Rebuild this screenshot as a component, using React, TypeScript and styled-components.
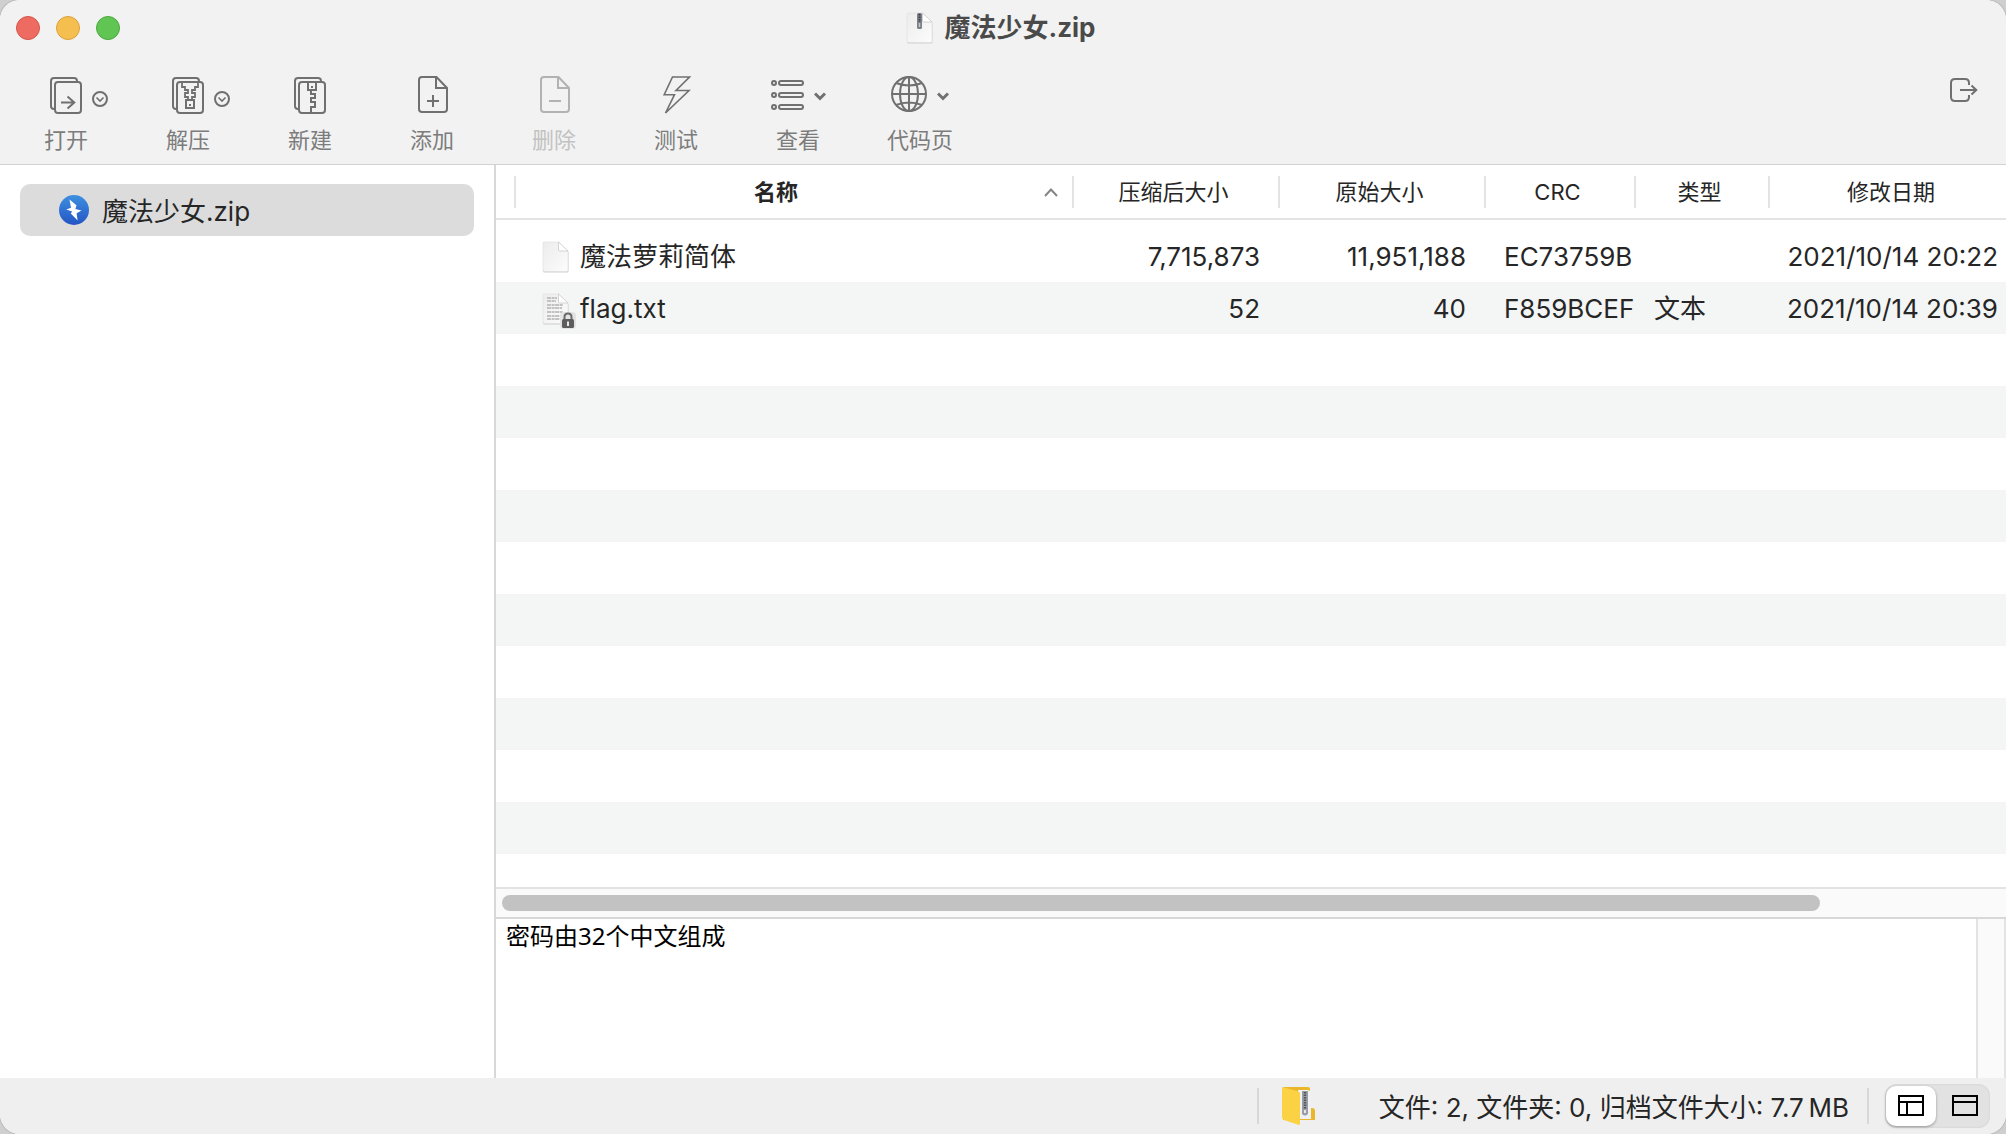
import React, { useState } from "react";
import styled, { createGlobalStyle, css } from "styled-components";

const color = {
  chrome: "#f2f2f2",
  status: "#efefef",
  line: "#e3e3e3",
  divider: "#d8d8d8",
  text: "#262626",
  label: "#7c7c7c",
  icon: "#707070",
  selected: "#dcdcdc",
  stripe: "#f4f5f5",
  track: "#fafafa",
};

const ROW = 52;
const HEAD = 65;

const GlobalStyle = createGlobalStyle`
  * { box-sizing: border-box; }
  body { margin: 0; background: #cfcfcf; }
  body, button, textarea {
    font-family: Inter, "Noto Sans CJK SC", sans-serif;
    color: ${color.text};
  }
  button { margin: 0; padding: 0; border: 0; background: none; }
  svg { display: block; flex: none; }
`;

const Window = styled.div`
  display: flex;
  flex-direction: column;
  height: 100vh;
  overflow: hidden;
  background: #fff;
  border-radius: 20px;
  box-shadow: 0 0 2px #8a8a8a;
`;

const Chrome = styled.header`
  background: ${color.chrome};
  border-bottom: 1px solid #d2d2d2;
`;

const TitleBar = styled.div`
  display: grid;
  grid-template-columns: 1fr auto 1fr;
  align-items: center;
  height: 54px;
  padding: 2px 22px 0 16px;
`;

const Lights = styled.div`
  display: flex;
  gap: 16px;
`;

const Light = styled.button<{ $fill: string; $edge: string }>`
  width: 24px;
  height: 24px;
  border-radius: 50%;
  background: ${(p) => p.$fill};
  border: 1px solid ${(p) => p.$edge};
`;

const Title = styled.h1`
  display: flex;
  align-items: center;
  gap: 10px;
  margin: 0;
  font-size: 26px;
  line-height: 36px;
  font-weight: 700;
  color: #4a4a4a;
`;

const Toolbar = styled.div`
  display: flex;
  align-items: flex-start;
  padding: 22px 28px 9px 5px;
`;

const ToolButton = styled.button`
  display: flex;
  flex-direction: column;
  align-items: center;
  gap: 11px;
  width: 122px;
  font-size: 22px;
  line-height: 30px;
  color: ${color.label};
  svg { color: ${color.icon}; }
  &:disabled { color: #c2c2c2; }
  &:disabled svg { color: #b2b2b2; }
`;

const IconRow = styled.span`
  display: grid;
  grid-template-columns: 1fr auto 1fr;
  align-items: center;
  gap: 10px;
  height: 38px;
  & > :first-child { grid-column: 2; }
`;

const IconPair = styled.span`
  display: flex;
  align-items: center;
  gap: 10px;
  height: 38px;
`;

const ExitButton = styled.button`
  margin-left: auto;
  color: ${color.icon};
`;

const Body = styled.div`
  display: flex;
  flex: 1;
  min-height: 0;
`;

const Sidebar = styled.nav`
  flex: none;
  width: 496px;
  padding: 19px 20px;
  border-right: 2px solid ${color.divider};
`;

const SideItem = styled.button`
  display: flex;
  align-items: center;
  gap: 13px;
  width: 100%;
  height: 52px;
  padding: 0 39px;
  border-radius: 10px;
  background: ${color.selected};
  font-size: 26px;
  line-height: 36px;
`;

const Label = styled.span`
  padding-top: 3px;
`;

const Main = styled.main`
  display: flex;
  flex: 1;
  flex-direction: column;
  min-width: 0;
`;

const List = styled.div`
  flex: 1;
  min-height: 0;
  overflow: hidden;
  background:
    linear-gradient(#fff, #fff) 0 0 / 100% ${HEAD}px no-repeat,
    linear-gradient(#fff 50%, ${color.stripe} 50%) 0 ${HEAD}px / 100% ${ROW * 2}px repeat-y;
`;

const Table = styled.table`
  width: 100%;
  table-layout: fixed;
  border-spacing: 0;
  tbody::before {
    content: "";
    display: block;
    height: 10px;
  }
`;

const Col = styled.col<{ $w?: number }>`
  ${(p) => p.$w && css`width: ${p.$w}px;`}
`;

const Th = styled.th`
  padding: 11px 0 10px;
  border-bottom: 2px solid ${color.line};
  font-weight: 400;
`;

const HeadCell = styled.button<{ $strong?: boolean; $shift?: boolean }>`
  display: flex;
  align-items: center;
  justify-content: center;
  width: 100%;
  height: 32px;
  padding: ${(p) => (p.$shift ? "0 0 0 6px" : p.$strong ? "0" : "0 5px 0 0")};
  border-left: 2px solid ${color.line};
  font-size: 22px;
  line-height: 30px;
  font-weight: ${(p) => (p.$strong ? 700 : 400)};
`;

const HeadLabel = styled.span`
  flex: 1;
`;

const SortMark = styled.span`
  display: flex;
  width: 36px;
  padding-left: 8px;
  color: #858585;
`;

const Td = styled.td<{ $right?: boolean }>`
  height: ${ROW}px;
  padding: 2px 18px 0 20px;
  font-size: 26px;
  line-height: 36px;
  white-space: nowrap;
  text-align: ${(p) => (p.$right ? "right" : "left")};
`;

const DateTd = styled(Td)`
  padding: 2px 8px 0 0;
`;

const NameCell = styled.div`
  display: flex;
  align-items: center;
  gap: 10px;
  padding-left: 6px;
`;

const ScrollTrack = styled.div`
  flex: none;
  height: 32px;
  padding: 6px 6px 0;
  background: ${color.track};
  border-top: 2px solid ${color.line};
  border-bottom: 2px solid ${color.divider};
`;

const ScrollThumb = styled.div`
  width: 88%;
  height: 16px;
  border-radius: 8px;
  background: #c2c2c2;
`;

const CommentPane = styled.div`
  display: flex;
  flex: none;
  height: 159px;
`;

const Comment = styled.textarea`
  flex: 1;
  padding: 0 10px;
  border: 0;
  outline: 0;
  resize: none;
  font-family: "Noto Sans", "Noto Sans CJK SC", sans-serif;
  font-size: 24px;
  line-height: 34px;
  color: #000;
`;

const CommentTrack = styled.div`
  width: 30px;
  background: ${color.track};
  border: 2px solid ${color.line};
  border-width: 0 2px;
`;

const StatusBar = styled.footer`
  display: flex;
  flex: none;
  align-items: center;
  justify-content: flex-end;
  height: 56px;
  padding-right: 16px;
  background: ${color.status};
  font-size: 26px;
  line-height: 36px;
`;

const Rule = styled.span`
  width: 2px;
  height: 36px;
  background: ${color.divider};
`;

const FolderButton = styled.button`
  margin: 0 63px 0 22px;
`;

const Summary = styled(Label)`
  margin-right: 18px;
`;

const Segments = styled.div`
  display: flex;
  gap: 4px;
  margin-left: 16px;
  padding: 2px 0 2px 1px;
  border-radius: 12px;
  background: #e2e2e2;
  box-shadow: inset 0 0 2px #c8c8c8;
`;

const Segment = styled.button<{ $on: boolean }>`
  display: grid;
  place-items: center;
  width: 50px;
  height: 40px;
  border-radius: 10px;
  color: #000;
  ${(p) => p.$on && css`
    background: #fff;
    box-shadow: 0 1px 3px rgba(0, 0, 0, 0.35);
  `}
`;

const stroke = { fill: "none", stroke: "currentColor", strokeWidth: 2 } as const;

const Sheets = ({ children }: { children: React.ReactNode }) => (
  <svg width="32" height="38" viewBox="0 0 32 38" {...stroke}>
    <path d="M5 33H4Q1 33 1 30V5Q1 2 4 2H24Q27 2 27 5V6" />
    <rect x="5" y="6" width="26" height="31" rx="3" />
    {children}
  </svg>
);

const OpenIcon = () => (
  <Sheets><path d="M11 26.5H24M17.5 20.5L24.3 26.5L17.5 32.5" /></Sheets>
);

const ExtractIcon = () => (
  <Sheets>
    <path d="M13 6H10V11H13V14H16V17H13V21H16V24M23 6H26V11H23V14H20V17H23V21H20V24" strokeWidth="1.8" />
    <rect x="14" y="24" width="8" height="8" />
    <path d="M17 29H19" />
  </Sheets>
);

const CreateIcon = () => (
  <Sheets>
    <path d="M14 6V14H22V6M17 11H19M17 14V18H21V22H17V26H21V31H17V37" />
  </Sheets>
);

const DocIcon = ({ plus }: { plus?: boolean }) => (
  <svg width="32" height="38" viewBox="-2 0 32 38" {...stroke}>
    <path d="M4 1H18.5L29 12V33Q29 36 26 36H4Q1 36 1 33V4Q1 1 4 1ZM18 1V12H29M9 25H21" />
    {plus && <path d="M15 19V31" />}
  </svg>
);

const BoltIcon = () => (
  <svg width="30" height="38" viewBox="-2 0 30 38" {...stroke} strokeWidth="1.6">
    <path d="M9.5 1H26.5L13 14.5H26L2.5 37L11.5 18.7H1.2Z" />
  </svg>
);

const ListIcon = () => (
  <svg width="34" height="38" viewBox="-1 0 34 38" {...stroke}>
    {[7, 19, 31].map((y) => (
      <g key={y}>
        <circle cx="3" cy={y} r="2" />
        <rect x="8" y={y - 2} width="24" height="4" rx="2" />
      </g>
    ))}
  </svg>
);

const GlobeIcon = () => (
  <svg width="36" height="38" viewBox="0 0 36 38" {...stroke}>
    <circle cx="18" cy="18" r="17" />
    <ellipse cx="18" cy="18" rx="9" ry="17" />
    <path d="M18 1V35M1 18H35M5 7Q18 12 31 7M5 29Q18 24 31 29" />
  </svg>
);

const RingChevron = () => (
  <svg width="16" height="24" viewBox="0 0 16 24" {...stroke}>
    <circle cx="8" cy="16" r="7" />
    <path d="M4.5 14.5L8 18L11.5 14.5" strokeWidth="1.6" />
  </svg>
);

const Chevron = () => (
  <svg width="12" height="12" viewBox="0 0 12 12" {...stroke} strokeWidth="3">
    <path d="M1 4.5L6 9.5L11 4.5" />
  </svg>
);

const ExitIcon = () => (
  <svg width="28" height="28" viewBox="0 0 28 28" {...stroke}>
    <path d="M19 9V7Q19 3 15 3H5Q1 3 1 7V21Q1 25 5 25H15Q19 25 19 21V19M10 14H26M21.5 9.5L26.3 14L21.5 18.5" />
  </svg>
);

const BoltBadge = () => (
  <svg width="30" height="30" viewBox="0 0 30 30">
    <defs>
      <linearGradient id="badge" x1="0" y1="0" x2="0" y2="1">
        <stop offset="0" stopColor="#3d90e0" />
        <stop offset="1" stopColor="#2455c4" />
      </linearGradient>
    </defs>
    <circle cx="15" cy="15" r="15" fill="url(#badge)" />
    <path d="M10.5 4.5L17.5 10.2L16.4 14L22.5 15.6L17.6 18.2L18.6 25.5L11.8 18.6L13.2 16.6L7.2 14.6L12 12.8Z" fill="#fff" />
  </svg>
);

const Paper = ({ kind }: { kind: "blank" | "text" | "zip" }) => (
  <svg width="30" height="36" viewBox="0 0 30 36">
    <defs>
      <linearGradient id={"paper-" + kind} x1="0" y1="0" x2="1" y2="1">
        <stop offset="0" stopColor="#ececec" />
        <stop offset="1" stopColor="#fcfcfc" />
      </linearGradient>
    </defs>
    <path d="M3 4.5H19L28.5 13V32Q28.5 33.5 27 33.5H4.5Q3 33.5 3 32Z" fill="#cfcfcf" />
    <path d="M4 3H18.5L28 12V31Q28 32.5 26.5 32.5H4.5Q3 32.5 3 31V4Q3 3 4 3Z" fill={`url(#paper-${kind})`} stroke="#dedede" strokeWidth=".6" />
    <path d="M18.5 3V11Q18.5 12 19.5 12H28Z" fill="#fff" stroke="#c9c9c9" strokeWidth=".8" />
    {kind === "text" && (
      <path d="M7 7H17M7 10H16M7 14H23M7 17H22M7 21H23M7 25H22M7 28H21" stroke="#c2c2c2" strokeWidth="1.8" strokeDasharray="4 .6 3 .5" />
    )}
    {kind === "zip" && (
      <>
        <rect x="13" y="3" width="5" height="16" rx="1.5" fill="#7d8187" />
        <path d="M15.5 4V12" stroke="#3f4349" strokeWidth="2" strokeDasharray="1.5 1" />
        <path d="M15.5 13V17" stroke="#c3c6ca" strokeWidth="1.5" />
      </>
    )}
  </svg>
);

const FileIconBox = styled.span`
  position: relative;
  display: block;
`;

const LockBadge = styled.svg`
  position: absolute;
  left: 20px;
  top: 20px;
`;

const FileIcon = ({ locked }: { locked: boolean }) => (
  <FileIconBox>
    <Paper kind={locked ? "text" : "blank"} />
    {locked && (
      <LockBadge width="16" height="18" viewBox="0 0 16 18">
        <rect x="0" y="1" width="16" height="17" rx="4" fill="#e3e3e3" />
        <path d="M4.5 9V6Q4.5 2.5 8 2.5Q11.5 2.5 11.5 6V9" fill="none" stroke="#6a6a6a" strokeWidth="2" />
        <rect x="2" y="8" width="12" height="9" rx="1.5" fill="#5d5d5d" />
        <path d="M8 10.5V15" stroke="#e8e8e8" strokeWidth="2" />
      </LockBadge>
    )}
  </FileIconBox>
);

const FolderIcon = () => (
  <svg width="35" height="40" viewBox="0 0 35 40">
    <path d="M1 3Q1 1 3 1H27Q29 1 29 3V22H31Q34 22 34 25V34H17L2 34Z" fill="#e9b62c" />
    <path d="M17 4H27Q30 5 30 7V33H17Z" fill="#f0f1f3" />
    <path d="M21 5H27V28Q24 31 21 28Z" fill="#9a9fa6" />
    <path d="M24 6V23" stroke="#50555d" strokeWidth="2.5" strokeDasharray="1.5 1" />
    <path d="M24 24V27" stroke="#e4e6e8" strokeWidth="2" />
    <path d="M1 3Q1 1 3 1.5L16 5Q19 5.500 19 8V37Q19 40 16.5 38.5L3 34Q1 33 1 31Z" fill="#fad243" />
  </svg>
);

const LayoutIcon = ({ split }: { split?: boolean }) => (
  <svg width="26" height="22" viewBox="0 0 26 22" {...stroke}>
    <path d="M1 1H25V20H1ZM1 7H25" />
    {split && <path d="M9 7V20" />}
  </svg>
);

type Tool = {
  label: string;
  icon: React.ReactNode;
  badge?: React.ReactNode;
  paired?: boolean;
  disabled?: boolean;
};

const tools: Tool[] = [
  { label: "打开", icon: <OpenIcon />, badge: <RingChevron /> },
  { label: "解压", icon: <ExtractIcon />, badge: <RingChevron /> },
  { label: "新建", icon: <CreateIcon /> },
  { label: "添加", icon: <DocIcon plus /> },
  { label: "删除", icon: <DocIcon />, disabled: true },
  { label: "测试", icon: <BoltIcon /> },
  { label: "查看", icon: <ListIcon />, badge: <Chevron />, paired: true },
  { label: "代码页", icon: <GlobeIcon />, badge: <Chevron />, paired: true },
];

const files = [
  { name: "魔法萝莉简体", packed: "7,715,873", size: "11,951,188", crc: "EC73759B", type: "", date: "2021/10/14 20:22", locked: false },
  { name: "flag.txt", packed: "52", size: "40", crc: "F859BCEF", type: "文本", date: "2021/10/14 20:39", locked: true },
];

export default function App() {
  const [view, setView] = useState(0);
  return (
    <>
      <GlobalStyle />
      <Window>
        <Chrome>
          <TitleBar>
            <Lights>
              <Light aria-label="关闭" $fill="#ed6b60" $edge="#d5544a" />
              <Light aria-label="最小化" $fill="#f5bf4f" $edge="#d9a13c" />
              <Light aria-label="缩放" $fill="#61c554" $edge="#4aa73d" />
            </Lights>
            <Title>
              <Paper kind="zip" />
              魔法少女.zip
            </Title>
          </TitleBar>
          <Toolbar>
            {tools.map((t) => {
              const Row = t.paired ? IconPair : IconRow;
              return (
                <ToolButton key={t.label} disabled={t.disabled}>
                  <Row>
                    {t.icon}
                    {t.badge}
                  </Row>
                  {t.label}
                </ToolButton>
              );
            })}
            <ExitButton aria-label="退出">
              <ExitIcon />
            </ExitButton>
          </Toolbar>
        </Chrome>
        <Body>
          <Sidebar>
            <SideItem>
              <BoltBadge />
              <Label>魔法少女.zip</Label>
            </SideItem>
          </Sidebar>
          <Main>
            <List>
              <Table>
                <colgroup>
                  <Col $w={18} />
                  <Col />
                  <Col $w={206} />
                  <Col $w={206} />
                  <Col $w={150} />
                  <Col $w={134} />
                  <Col $w={238} />
                </colgroup>
                <thead>
                  <tr>
                    <Th />
                    <Th aria-sort="ascending">
                      <HeadCell $strong>
                        <HeadLabel>名称</HeadLabel>
                        <SortMark>
                          <svg width="14" height="10" viewBox="0 0 14 10" {...stroke}>
                            <path d="M1 9L7 2.5L13 9" />
                          </svg>
                        </SortMark>
                      </HeadCell>
                    </Th>
                    <Th><HeadCell>压缩后大小</HeadCell></Th>
                    <Th><HeadCell>原始大小</HeadCell></Th>
                    <Th><HeadCell>CRC</HeadCell></Th>
                    <Th><HeadCell>类型</HeadCell></Th>
                    <Th><HeadCell $shift>修改日期</HeadCell></Th>
                  </tr>
                </thead>
                <tbody>
                  {files.map((f) => (
                    <tr key={f.name}>
                      <Td />
                      <Td>
                        <NameCell>
                          <FileIcon locked={f.locked} />
                          {f.name}
                        </NameCell>
                      </Td>
                      <Td $right>{f.packed}</Td>
                      <Td $right>{f.size}</Td>
                      <Td>{f.crc}</Td>
                      <Td>{f.type}</Td>
                      <DateTd $right>{f.date}</DateTd>
                    </tr>
                  ))}
                </tbody>
              </Table>
            </List>
            <ScrollTrack>
              <ScrollThumb />
            </ScrollTrack>
            <CommentPane>
              <Comment aria-label="注释" readOnly value="密码由32个中文组成" />
              <CommentTrack />
            </CommentPane>
          </Main>
        </Body>
        <StatusBar>
          <Rule />
          <FolderButton aria-label="归档文件夹">
            <FolderIcon />
          </FolderButton>
          <Summary>文件: 2, 文件夹: 0, 归档文件大小: 7.7{"\u2009"}MB</Summary>
          <Rule />
          <Segments>
            {[true, false].map((split, i) => (
              <Segment
                key={i}
                $on={view === i}
                aria-pressed={view === i}
                aria-label={split ? "分栏视图" : "单栏视图"}
                onClick={() => setView(i)}
              >
                <LayoutIcon split={split} />
              </Segment>
            ))}
          </Segments>
        </StatusBar>
      </Window>
    </>
  );
}
